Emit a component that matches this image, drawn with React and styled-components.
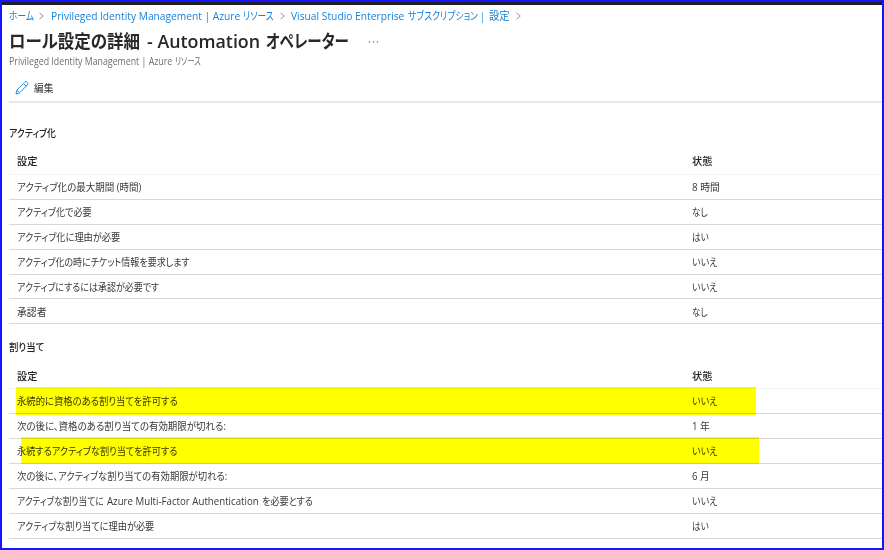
import React, { useLayoutEffect, useRef } from "react";
import styled, { createGlobalStyle } from "styled-components";

const Global = createGlobalStyle`
  * { box-sizing: border-box; }
  body { margin: 0; background: #fff; }
`;

const Frame = styled.div`
  position: relative;
  width: 884px;
  height: 550px;
  overflow: hidden;
  border: 2px solid #1414ff;
  background: #fff;
  color: #333;
  font-family: "Open Sans", "Noto Sans CJK JP", sans-serif;
  font-size: 10.2px;
  font-feature-settings: "palt";
`;

const TopBar = styled.div`
  height: 3px;
  background: #201f24;
`;

const Page = styled.main`
  padding-left: 7px;
`;

const Line = styled.div`
  display: flex;
  align-items: center;
  height: ${(p) => p.$height}px;
  padding-left: ${(p) => p.$indent || 0}px;
  gap: ${(p) => p.$gap || 0}px;
`;

const Breadcrumb = styled(Line).attrs({ as: "nav" })`
  color: #1683d8;
  font-size: 10.8px;
`;

const Title = styled(Line).attrs({ as: "h1" })`
  margin: 0;
  padding-top: 1px;
  color: #292827;
  font-size: 18px;
  font-weight: 600;
`;

const Subtitle = styled(Line)`
  padding-bottom: 2px;
  color: #706e6c;
  font-size: 10px;
`;

const Toolbar = styled(Line)`
  height: 31px;
  margin-top: 4px;
  padding-top: 3px;
  border-bottom: 2px solid #e8e8e8;
`;

const Section = styled.section`
  padding-top: ${(p) => p.$top}px;
`;

const SectionTitle = styled(Line).attrs({ as: "h2" })`
  margin: 0 0 9px;
  font-size: 10.2px;
  font-weight: 500;
  color: #222;
`;

const Row = styled.div`
  display: grid;
  grid-template-columns: 675px 1fr;
  align-items: center;
  height: ${(p) => (p.$head ? "26px" : "24.9px")};
  padding-top: ${(p) => (p.$head ? 0 : 0.6)}px;
  padding-left: 8px;
  border-bottom: 1px solid ${(p) => (p.$head ? "#f3f3f3" : "#d8d8d8")};
  font-weight: ${(p) => (p.$head ? 500 : 400)};
  color: ${(p) => (p.$head ? "#222" : "#383838")};
`;

const Cell = styled.div`
  display: flex;
`;

const Slot = styled.span`
  display: inline-block;
  flex: none;
  width: ${(p) => p.$width}px;
  margin-left: ${(p) => p.$before || 0}px;
  line-height: 1.4;
  white-space: nowrap;
`;

const Glyphs = styled.span`
  display: inline-block;
  transform-origin: left center;
`;

const Chevron = styled.svg`
  flex: none;
  width: 5px;
  height: 8px;
  margin: ${(p) => p.$margin};
  fill: none;
  stroke: #999;
`;

const Pencil = styled.svg`
  width: 14px;
  height: 14px;
  fill: none;
  stroke: #2b91df;
  stroke-linejoin: round;
`;

const Dots = styled.svg`
  width: 11px;
  height: 4px;
  margin-left: 19px;
  fill: #777;
`;

const Highlight = styled.div`
  position: absolute;
  left: ${(p) => p.$x}px;
  top: ${(p) => p.$y}px;
  width: ${(p) => p.$w}px;
  height: ${(p) => p.$h}px;
  background: #ff0;
  mix-blend-mode: multiply;
  pointer-events: none;
`;

function FitText({ width, before, children }) {
  const ref = useRef(null);
  useLayoutEffect(() => {
    const el = ref.current;
    const fit = () => {
      el.style.transform = `scaleX(${width / el.offsetWidth})`;
    };
    fit();
    document.fonts.ready.then(fit);
  }, [width, children]);
  return (
    <Slot $width={width} $before={before}>
      <Glyphs ref={ref}>{children}</Glyphs>
    </Slot>
  );
}

const Arrow = ({ margin }) => (
  <Chevron $margin={margin} viewBox="0 0 5 8">
    <path d="M.5 1 4.3 4 .5 7" />
  </Chevron>
);

function Table({ rows }) {
  return (
    <div>
      <Row $head>
        <FitText width={20}>設定</FitText>
        <FitText width={20}>状態</FitText>
      </Row>
      {rows.map(([parts, value, valueWidth]) => (
        <Row key={parts.map(([text]) => text).join(" ")}>
          <Cell>
            {parts.map(([text, width, before]) => (
              <FitText key={text} width={width} before={before}>{text}</FitText>
            ))}
          </Cell>
          <FitText width={valueWidth}>{value}</FitText>
        </Row>
      ))}
    </div>
  );
}

const activation = [
  [[["アクティブ化の最大期間 (時間)", 124]], "8 時間", 28],
  [[["アクティブ化で必要", 75]], "なし", 16],
  [[["アクティブ化に理由が必要", 103]], "はい", 17],
  [[["アクティブ化の時にチケット情報を要求します", 173]], "いいえ", 25],
  [[["アクティブにするには承認が必要です", 142]], "いいえ", 25],
  [[["承認者", 30]], "なし", 16],
];

const assignment = [
  [[["永続的に資格のある割り当てを許可する", 161]], "いいえ", 25],
  [[["次の後に、資格のある割り当ての有効期限が切れる:", 209]], "1 年", 18],
  [[["永続するアクティブな割り当てを許可する", 160]], "いいえ", 25],
  [[["次の後に、アクティブな割り当ての有効期限が切れる:", 210]], "6 月", 18],
  [[["アクティブな割り当てに", 87], ["Azure Multi-Factor Authentication", 152, 3], ["を必要とする", 51, 3]], "いいえ", 25],
  [[["アクティブな割り当てに理由が必要", 137]], "はい", 17],
];

export default function App() {
  return (
    <>
      <Global />
      <Frame>
        <TopBar />
        <Page>
          <Breadcrumb $height={22}>
            <FitText width={25}>ホーム</FitText>
            <Arrow margin="0 7px 0 5px" />
            <FitText width={189}>Privileged Identity Management | Azure</FitText>
            <FitText width={31} before={3}>リソース</FitText>
            <Arrow margin="0 6px 0 6px" />
            <FitText width={113}>Visual Studio Enterprise</FitText>
            <FitText width={77} before={4}>サブスクリプション |</FitText>
            <FitText width={21} before={4}>設定</FitText>
            <Arrow margin="0 0 0 6px" />
          </Breadcrumb>
          <Title $height={29}>
            <FitText width={131}>ロール設定の詳細</FitText>
            <FitText width={113} before={7}>- Automation</FitText>
            <FitText width={83} before={6}>オペレーター</FitText>
            <Dots viewBox="0 0 11 4">
              <circle cx="1.5" cy="2" r=".8" />
              <circle cx="5.5" cy="2" r=".8" />
              <circle cx="9.5" cy="2" r=".8" />
            </Dots>
          </Title>
          <Subtitle $height={12}>
            <FitText width={163}>Privileged Identity Management | Azure</FitText>
            <FitText width={26} before={3}>リソース</FitText>
          </Subtitle>
          <Toolbar $indent={6} $gap={5}>
            <Pencil viewBox="0 0 14 14">
              <path d="m1 13 .8-3.8L9.6 1.4a1.65 1.65 0 0 1 2.7 0c.7.8.7 1.8 0 2.6l-7.8 7.8L1 13Z" />
              <path d="m8.5 2.5 2.9 2.9M1.8 9.2l2.7 2.6" />
            </Pencil>
            <FitText width={19}>編集</FitText>
          </Toolbar>
          <Section $top={23}>
            <SectionTitle $height={14}>
              <FitText width={47}>アクティブ化</FitText>
            </SectionTitle>
            <Table rows={activation} />
          </Section>
          <Section $top={16}>
            <SectionTitle $height={14}>
              <FitText width={35}>割り当て</FitText>
            </SectionTitle>
            <Table rows={assignment} />
          </Section>
        </Page>
        <Highlight $x={14} $y={385} $w={740} $h={28} />
        <Highlight $x={19} $y={435} $w={738} $h={27} />
      </Frame>
    </>
  );
}
